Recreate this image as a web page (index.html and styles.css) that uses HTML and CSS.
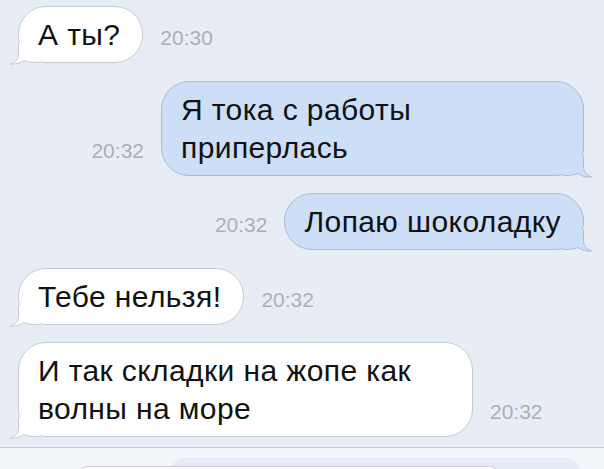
FILE: index.html
```html
<!DOCTYPE html>
<html lang="ru">
<head>
<meta charset="utf-8">
<link rel="stylesheet" href="styles.css">
</head>
<body>
<div class="chat">
  <div class="row in">
    <div class="bubble white">
      <svg class="tail" viewBox="0 0 30 22" width="30" height="22"><path class="tf" d="M9.5 0 V11 C9.5 16 6 19.5 1.5 21 C7 21.5 11.5 20 15 17.5 C18 19 22 19.5 30 19.5 L30 0 Z"/><path class="ts" d="M9.5 0 V11 C9.5 16 6 19.5 1.5 21 C7 21.5 11.5 20 15 17.5 C18 19 22 19.5 30 19.5"/></svg>
      <span class="txt">А ты?</span>
    </div>
    <span class="time">20:30</span>
  </div>
  <div class="row out">
    <span class="time">20:32</span>
    <div class="bubble blue w423">
      <svg class="tail" viewBox="0 0 30 22" width="30" height="22"><path class="tf" d="M9.5 0 V11 C9.5 16 6 19.5 1.5 21 C7 21.5 11.5 20 15 17.5 C18 19 22 19.5 30 19.5 L30 0 Z"/><path class="ts" d="M9.5 0 V11 C9.5 16 6 19.5 1.5 21 C7 21.5 11.5 20 15 17.5 C18 19 22 19.5 30 19.5"/></svg>
      <span class="txt">Я тока с работы<br>приперлась</span>
    </div>
  </div>
  <div class="row out">
    <span class="time">20:32</span>
    <div class="bubble blue">
      <svg class="tail" viewBox="0 0 30 22" width="30" height="22"><path class="tf" d="M9.5 0 V11 C9.5 16 6 19.5 1.5 21 C7 21.5 11.5 20 15 17.5 C18 19 22 19.5 30 19.5 L30 0 Z"/><path class="ts" d="M9.5 0 V11 C9.5 16 6 19.5 1.5 21 C7 21.5 11.5 20 15 17.5 C18 19 22 19.5 30 19.5"/></svg>
      <span class="txt">Лопаю шоколадку</span>
    </div>
  </div>
  <div class="row in">
    <div class="bubble white">
      <svg class="tail" viewBox="0 0 30 22" width="30" height="22"><path class="tf" d="M9.5 0 V11 C9.5 16 6 19.5 1.5 21 C7 21.5 11.5 20 15 17.5 C18 19 22 19.5 30 19.5 L30 0 Z"/><path class="ts" d="M9.5 0 V11 C9.5 16 6 19.5 1.5 21 C7 21.5 11.5 20 15 17.5 C18 19 22 19.5 30 19.5"/></svg>
      <span class="txt">Тебе нельзя!</span>
    </div>
    <span class="time">20:32</span>
  </div>
  <div class="row in">
    <div class="bubble white w455">
      <svg class="tail" viewBox="0 0 30 22" width="30" height="22"><path class="tf" d="M9.5 0 V11 C9.5 16 6 19.5 1.5 21 C7 21.5 11.5 20 15 17.5 C18 19 22 19.5 30 19.5 L30 0 Z"/><path class="ts" d="M9.5 0 V11 C9.5 16 6 19.5 1.5 21 C7 21.5 11.5 20 15 17.5 C18 19 22 19.5 30 19.5"/></svg>
      <span class="txt">И так складки на жопе как<br>волны на море</span>
    </div>
    <span class="time">20:32</span>
  </div>
</div>
<div class="bar">
  <div class="ghost"></div>
  <div class="input"></div>
</div>
</body>
</html>
```

FILE: styles.css
```css
* { box-sizing: border-box; }
html, body {
  margin: 0;
  padding: 0;
  width: 604px;
  height: 469px;
  overflow: hidden;
  background: #e8edf5;
  font-family: "Liberation Sans", Arial, sans-serif;
}
.chat {
  height: 447px;
  padding-top: 6px;
  display: flex;
  flex-direction: column;
  gap: 17.5px;
}
.row {
  display: flex;
  align-items: flex-end;
  gap: 17px;
}
.row.in { padding-left: 18px; justify-content: flex-start; }
.row.out { padding-right: 20px; justify-content: flex-end; }
.bubble {
  position: relative;
  border: 1px solid #c3cad3;
  border-radius: 28px;
  padding: 9px 22px 8px 19px;
  font-size: 30px;
  letter-spacing: 0.4px;
  line-height: 38px;
  color: #111;
  white-space: nowrap;
}
.bubble.white { background: #ffffff; }
.bubble.blue { background: #cddff7; border-color: #a9bcd5; }
.w423 { width: 423px; }
.w455 { width: 455px; }
.txt { position: relative; }
.tail {
  position: absolute;
  left: -10px;
  bottom: -3px;
  display: block;
}
.out .tail {
  left: auto;
  right: -10px;
  transform: scaleX(-1);
}
.tf { stroke: none; }
.ts { fill: none; stroke-width: 1; }
.white .tf { fill: #ffffff; }
.white .ts { stroke: #c3cad3; }
.blue .tf { fill: #cddff7; }
.blue .ts { stroke: #a9bcd5; }
.time {
  font-size: 21px;
  line-height: 24px;
  color: #aab0b8;
  margin-bottom: 13px;
}
.bar {
  position: relative;
  height: 22px;
  overflow: hidden;
  border-top: 1px solid #c6cdd7;
  background: #f2f5f9;
}
.ghost {
  position: absolute;
  left: 169px;
  top: 10px;
  width: 412px;
  height: 40px;
  border-radius: 16px;
  background: #e6ecf5;
}
.input {
  position: absolute;
  left: 79px;
  top: 18px;
  width: 419px;
  height: 40px;
  border-radius: 8px;
  border: 1px solid #c9ced6;
  background: #ffffff;
}
```
